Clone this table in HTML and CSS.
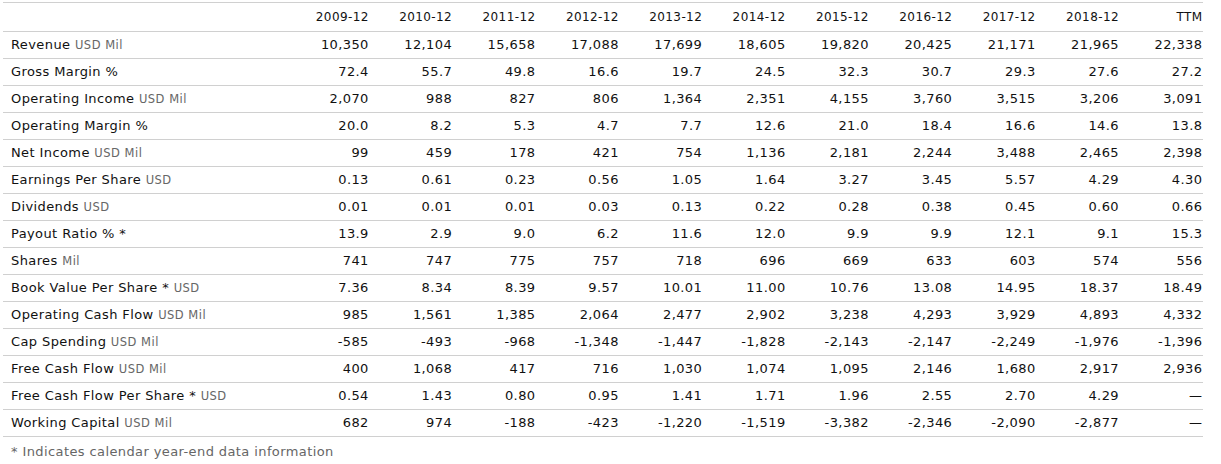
FILE: index.html
```html
<!DOCTYPE html>
<html>
<head>
<meta charset="utf-8">
<link rel="stylesheet" href="styles.css">
</head>
<body>
<div class="wrap">
<table class="fin">
<colgroup><col class="c-label"><col><col><col><col><col><col><col><col><col><col><col></colgroup>
<thead>
<tr><th></th><th>2009-12</th><th>2010-12</th><th>2011-12</th><th>2012-12</th><th>2013-12</th><th>2014-12</th><th>2015-12</th><th>2016-12</th><th>2017-12</th><th>2018-12</th><th>TTM</th></tr>
</thead>
<tbody>
<tr><td>Revenue <span class="u">USD Mil</span></td><td>10,350</td><td>12,104</td><td>15,658</td><td>17,088</td><td>17,699</td><td>18,605</td><td>19,820</td><td>20,425</td><td>21,171</td><td>21,965</td><td>22,338</td></tr>
<tr><td>Gross Margin %</td><td>72.4</td><td>55.7</td><td>49.8</td><td>16.6</td><td>19.7</td><td>24.5</td><td>32.3</td><td>30.7</td><td>29.3</td><td>27.6</td><td>27.2</td></tr>
<tr><td>Operating Income <span class="u">USD Mil</span></td><td>2,070</td><td>988</td><td>827</td><td>806</td><td>1,364</td><td>2,351</td><td>4,155</td><td>3,760</td><td>3,515</td><td>3,206</td><td>3,091</td></tr>
<tr><td>Operating Margin %</td><td>20.0</td><td>8.2</td><td>5.3</td><td>4.7</td><td>7.7</td><td>12.6</td><td>21.0</td><td>18.4</td><td>16.6</td><td>14.6</td><td>13.8</td></tr>
<tr><td>Net Income <span class="u">USD Mil</span></td><td>99</td><td>459</td><td>178</td><td>421</td><td>754</td><td>1,136</td><td>2,181</td><td>2,244</td><td>3,488</td><td>2,465</td><td>2,398</td></tr>
<tr><td>Earnings Per Share <span class="u">USD</span></td><td>0.13</td><td>0.61</td><td>0.23</td><td>0.56</td><td>1.05</td><td>1.64</td><td>3.27</td><td>3.45</td><td>5.57</td><td>4.29</td><td>4.30</td></tr>
<tr><td>Dividends <span class="u">USD</span></td><td>0.01</td><td>0.01</td><td>0.01</td><td>0.03</td><td>0.13</td><td>0.22</td><td>0.28</td><td>0.38</td><td>0.45</td><td>0.60</td><td>0.66</td></tr>
<tr><td>Payout Ratio % *</td><td>13.9</td><td>2.9</td><td>9.0</td><td>6.2</td><td>11.6</td><td>12.0</td><td>9.9</td><td>9.9</td><td>12.1</td><td>9.1</td><td>15.3</td></tr>
<tr><td>Shares <span class="u">Mil</span></td><td>741</td><td>747</td><td>775</td><td>757</td><td>718</td><td>696</td><td>669</td><td>633</td><td>603</td><td>574</td><td>556</td></tr>
<tr><td>Book Value Per Share * <span class="u">USD</span></td><td>7.36</td><td>8.34</td><td>8.39</td><td>9.57</td><td>10.01</td><td>11.00</td><td>10.76</td><td>13.08</td><td>14.95</td><td>18.37</td><td>18.49</td></tr>
<tr><td>Operating Cash Flow <span class="u">USD Mil</span></td><td>985</td><td>1,561</td><td>1,385</td><td>2,064</td><td>2,477</td><td>2,902</td><td>3,238</td><td>4,293</td><td>3,929</td><td>4,893</td><td>4,332</td></tr>
<tr><td>Cap Spending <span class="u">USD Mil</span></td><td>-585</td><td>-493</td><td>-968</td><td>-1,348</td><td>-1,447</td><td>-1,828</td><td>-2,143</td><td>-2,147</td><td>-2,249</td><td>-1,976</td><td>-1,396</td></tr>
<tr><td>Free Cash Flow <span class="u">USD Mil</span></td><td>400</td><td>1,068</td><td>417</td><td>716</td><td>1,030</td><td>1,074</td><td>1,095</td><td>2,146</td><td>1,680</td><td>2,917</td><td>2,936</td></tr>
<tr><td>Free Cash Flow Per Share * <span class="u">USD</span></td><td>0.54</td><td>1.43</td><td>0.80</td><td>0.95</td><td>1.41</td><td>1.71</td><td>1.96</td><td>2.55</td><td>2.70</td><td>4.29</td><td>—</td></tr>
<tr><td>Working Capital <span class="u">USD Mil</span></td><td>682</td><td>974</td><td>-188</td><td>-423</td><td>-1,220</td><td>-1,519</td><td>-3,382</td><td>-2,346</td><td>-2,090</td><td>-2,877</td><td>—</td></tr>
</tbody>
</table>
<p class="note">* Indicates calendar year-end data information</p>
</div>
</body>
</html>
```
FILE: styles.css
```css
html, body {
  margin: 0;
  padding: 0;
  background: #fff;
}
body {
  font-family: "DejaVu Sans", Verdana, sans-serif;
  color: #000;
  letter-spacing: 0.4px;
}
.wrap {
  padding: 2px 0 0 3px;
}
.fin {
  width: 1200px;
  table-layout: fixed;
  border-collapse: collapse;
}
.c-label {
  width: 283px;
}
.fin th, .fin td {
  padding: 0 0.6px 0 0;
  text-align: right;
  vertical-align: middle;
  white-space: nowrap;
  border-top: 1px solid #d0d0d0;
}
.fin th {
  height: 28px;
  font-size: 12px;
  font-weight: normal;
  color: #111;
}
.fin td {
  height: 25px;
  padding-bottom: 1px;
  font-size: 13px;
  color: #111;
}
.fin td:first-child {
  text-align: left;
  padding-left: 8px;
}
.fin tbody tr:last-child td {
  border-bottom: 1px solid #d0d0d0;
}
.u {
  font-size: 11.5px;
  color: #666;
  letter-spacing: 0.5px;
}
.note {
  margin: 7px 0 0 8px;
  font-size: 13px;
  line-height: 16px;
  color: #666;
}
```
